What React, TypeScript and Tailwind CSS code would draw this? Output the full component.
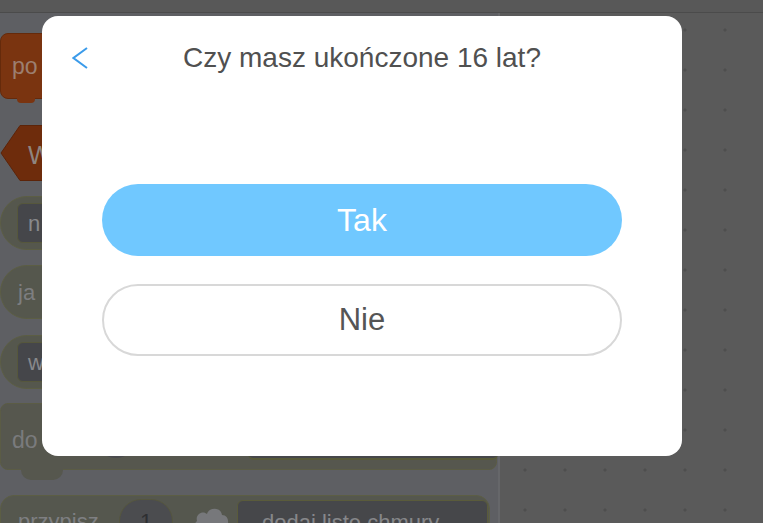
import React from 'react';

function Pill({ label, boxed }: { label: string; boxed?: boolean }) {
  return (
    <div className="w-[220px] h-[54px] rounded-full bg-[#55574d] border border-[#5c5e44] flex items-center pl-[16px]">
      {boxed ? (
        <div className="h-[40px] w-[120px] rounded-[6px] bg-[#45464a] border border-[#56573c] flex items-center pl-[10px] text-[22px] text-[#88898c]">
          {label}
        </div>
      ) : (
        <span className="text-[22px] text-[#7d7e80] pl-[1px]">{label}</span>
      )}
    </div>
  );
}

function Palette() {
  return (
    <aside className="w-[500px] shrink-0 bg-[#5e5f63] border-r-2 border-[#66676a] flex flex-col overflow-hidden *:shrink-0">
      {/* motion / events blocks */}
      <div className="relative mt-[20px] w-[200px] h-[66px] rounded-[8px] bg-[#7a3410] border border-[#652a0b] flex items-center pl-[11px]">
        <span className="text-[23px] text-[#9c7f70]">po</span>
        <div className="absolute left-[16px] -bottom-[5px] w-[18px] h-[5px] rounded-b-[4px] bg-[#7a3410]" />
      </div>
      <div className="relative mt-[26px] h-[56px] w-[200px]">
        <svg className="absolute inset-0" width="200" height="56" viewBox="0 0 200 56">
          <path d="M20 0.5 H199.5 V55.5 H20 L1 28 Z" fill="#6e2c0c" stroke="#5c2409" />
        </svg>
        <span className="absolute left-[28px] top-[12px] text-[25px] text-[#8e8580]">W</span>
      </div>

      {/* reporter pills */}
      <div className="mt-[15px]">
        <Pill label="n" boxed />
      </div>
      <div className="mt-[15px]">
        <Pill label="ja" />
      </div>
      <div className="mt-[16px]">
        <Pill label="w" boxed />
      </div>

      {/* c block */}
      <div className="relative mt-[14px] w-[497px] h-[67px] rounded-[8px] bg-[#56574e] border border-[#5b5c45]">
        <span className="absolute left-[11px] top-[19px] text-[23px] text-[#7a7b7d]">do</span>
        <div className="absolute left-[95px] top-[14px] w-[40px] h-[40px] rounded-full bg-[#4a4b4e]" />
        <div className="absolute left-[247px] top-[12px] w-[250px] h-[44px] rounded-[6px] bg-[#46474a] border-b-2 border-[#585a3a]" />
        <div className="absolute left-[20px] -bottom-[11px] w-[42px] h-[11px] rounded-b-[10px] bg-[#56574e]" />
      </div>

      {/* data block row */}
      <div className="relative mt-[25px] w-[490px] h-[50px] rounded-[14px] bg-[#55574e] border border-[#5c5e44]">
        <span className="absolute left-[17px] top-[9px] text-[22px] text-[#7e7f82]">przypisz</span>
        <div className="absolute left-[118px] top-[3px] w-[54px] h-[44px] rounded-full bg-[#4b4c4f] border border-[#55563f] flex justify-center pt-[5px] text-[22px] text-[#2e2f32]">
          1
        </div>
        <svg className="absolute left-[192px] top-[10px]" width="36" height="24" viewBox="0 0 36 24">
          <path d="M8 24 C2 24 0 18 4 15 C2 8 10 4 14 8 C16 1 28 1 29 9 C36 9 37 18 32 24 Z" fill="#77787b" />
        </svg>
        <div className="absolute left-[236px] top-[4px] w-[251px] h-[44px] rounded-[6px] bg-[#46474a] border border-[#5a5b3b] pl-[24px] pt-[5px] text-[22px] text-[#86878a] whitespace-nowrap">
          dodaj listę chmury
        </div>
      </div>
    </aside>
  );
}

export default function App() {
  return (
    <div className="relative w-[763px] h-[523px] overflow-hidden bg-[#5a5a5a] font-['Liberation_Sans',Arial,sans-serif]">
      {/* Top bar */}
      <div className="h-[13px] bg-[#585858] border-b border-[#4b4b4b]" />

      <div className="flex h-[510px]">
        <Palette />
        {/* Workspace with dot grid */}
        <main className="flex-1 bg-[#5a5a5a] bg-[radial-gradient(circle,#4e4e4e_1.3px,transparent_1.8px)] bg-[length:40px_40px] bg-[position:5px_-3px]" />
      </div>

      {/* Age dialog */}
      <div className="absolute left-[42px] top-[16px] w-[640px] h-[440px] rounded-[16px] bg-white flex flex-col">
        <div className="mt-[22px] h-[40px] flex items-center px-[30px]">
          <svg width="16" height="22" viewBox="0 0 16 22" className="shrink-0">
            <polyline points="15,1 1.5,11 15,21" fill="none" stroke="#3b9bea" strokeWidth="2" />
          </svg>
          <h1 className="flex-1 mr-[16px] text-center text-[28px] leading-[40px] text-[#505050]">
            Czy masz ukończone 16 lat?
          </h1>
        </div>

        <div className="mt-[106px] mx-[60px] flex flex-col gap-[28px]">
          <button className="h-[72px] rounded-full bg-[#70c8ff] text-white text-[32px]">
            Tak
          </button>
          <button className="h-[72px] rounded-full border-2 border-[#d8d8d8] bg-white text-[#555555] text-[31px]">
            Nie
          </button>
        </div>
      </div>
    </div>
  );
}
